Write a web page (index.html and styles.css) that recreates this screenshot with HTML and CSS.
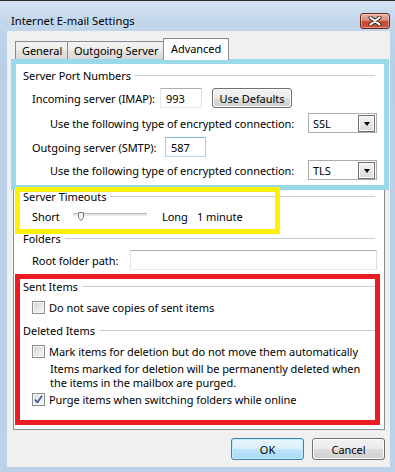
FILE: index.html
```html
<!DOCTYPE html>
<html>
<head>
<meta charset="utf-8">
<title>Internet E-mail Settings</title>
<link rel="stylesheet" href="styles.css">
</head>
<body>
<div class="window">
  <div class="titlebar">
    <span class="title">Internet E-mail Settings</span>
    <div class="close">
      <svg width="14" height="10" viewBox="0 0 14 10">
        <path d="M2.5 1.5 L11.5 8.5 M11.5 1.5 L2.5 8.5" stroke="#3b2a28" stroke-width="4" stroke-linecap="round" fill="none"/>
        <path d="M2.5 1.5 L11.5 8.5 M11.5 1.5 L2.5 8.5" stroke="#ffffff" stroke-width="2.2" stroke-linecap="round" fill="none"/>
      </svg>
    </div>
  </div>
  <div class="client">
    <div class="tabs">
      <div class="tab tab-general">General</div>
      <div class="tab tab-outgoing">Outgoing Server</div>
      <div class="tab tab-advanced active">Advanced</div>
    </div>
    <div class="panel">
      <div class="group-head head-ports"><span>Server Port Numbers</span><i class="rule"></i></div>
      <div class="row row-in">
        <span class="lbl lbl-in">Incoming server (IMAP):</span>
        <div class="textbox tb-in">993</div>
        <div class="btn btn-defaults">Use Defaults</div>
      </div>
      <div class="row row-enc row-enc1">
        <span class="lbl">Use the following type of encrypted connection:</span>
        <div class="select"><span>SSL</span><span class="drop"><i class="tri"></i></span></div>
      </div>
      <div class="row row-out">
        <span class="lbl lbl-out">Outgoing server (SMTP):</span>
        <div class="textbox tb-out">587</div>
      </div>
      <div class="row row-enc row-enc2">
        <span class="lbl">Use the following type of encrypted connection:</span>
        <div class="select"><span>TLS</span><span class="drop"><i class="tri"></i></span></div>
      </div>

      <div class="group-head head-timeouts"><span>Server Timeouts</span><i class="rule"></i></div>
      <div class="row row-slider">
        <span class="lbl lbl-short">Short</span>
        <div class="slider">
          <div class="track"></div>
          <svg class="thumb" width="8" height="9" viewBox="0 0 8 9">
            <path d="M1.5 0.5 H6.5 V5.5 L4 8.5 L1.5 5.5 Z" fill="#f3f3f3" stroke="#7c7c7c" stroke-width="1"/>
          </svg>
        </div>
        <span class="lbl lbl-long">Long</span>
        <span class="lbl">1 minute</span>
      </div>

      <div class="group-head head-folders"><span>Folders</span><i class="rule"></i></div>
      <div class="row row-root">
        <span class="lbl lbl-root">Root folder path:</span>
        <div class="textbox tb-root"></div>
      </div>

      <div class="group-head head-sent"><span>Sent Items</span><i class="rule"></i></div>
      <div class="row row-check row-nosave">
        <span class="cb"></span>
        <span class="lbl">Do not save copies of sent items</span>
      </div>

      <div class="group-head head-deleted"><span>Deleted Items</span><i class="rule"></i></div>
      <div class="row row-check row-mark">
        <span class="cb"></span>
        <span class="lbl">Mark items for deletion but do not move them automatically</span>
      </div>
      <div class="desc">Items marked for deletion will be permanently deleted when<br>the items in the mailbox are purged.</div>
      <div class="row row-check row-purge">
        <span class="cb checked">
          <svg width="11" height="11" viewBox="0 0 11 11"><path d="M2 5.6 L4.4 8.4 L9 1.8" stroke="#3f5a96" stroke-width="1.7" fill="none" stroke-linejoin="round"/></svg>
        </span>
        <span class="lbl">Purge items when switching folders while online</span>
      </div>
    </div>
    <div class="actions">
      <div class="btn btn-default">OK</div>
      <div class="btn">Cancel</div>
    </div>
  </div>

  <div class="hl hl-cyan"></div>
  <div class="hl hl-red"></div>
  <div class="hl hl-yellow"></div>
</div>
</body>
</html>
```

FILE: styles.css
```css
* { box-sizing: border-box; }

html, body {
  margin: 0;
  padding: 0;
}

body {
  width: 395px;
  height: 472px;
  overflow: hidden;
  background: #bcd2ea;
  font-family: "Noto Sans", "Open Sans", sans-serif;
  font-size: 11px;
  letter-spacing: -0.05px;
  color: #000;
}

.window {
  position: relative;
  width: 395px;
  height: 472px;
  border-top: 1px solid #2a2a2a;
  background: linear-gradient(180deg, #d3e2f1 0px, #c3d7ec 20px, #b9cfe8 60px, #bcd2ea 100%);
  display: flex;
  flex-direction: column;
}

/* title bar */
.titlebar {
  height: 30px;
  padding: 9px 5px 0 11px;
  display: flex;
  align-items: center;
  justify-content: space-between;
}

.title {
  font-size: 11.2px;
  letter-spacing: 0;
  color: #000;
}

.close {
  width: 30px;
  height: 16px;
  border: 1px solid #6b2a22;
  border-radius: 3px;
  background: linear-gradient(180deg, #e9b2a6 0%, #d98b7b 45%, #c24832 55%, #c65a40 100%);
  box-shadow: inset 0 0 0 1px rgba(255, 220, 210, 0.45);
  display: flex;
  align-items: center;
  justify-content: center;
}

/* client area */
.client {
  flex: 1;
  margin: 0 5px 5px 7px;
  background: #f0f0f0;
  padding-top: 7px;
  display: flex;
  flex-direction: column;
}

.tabs {
  height: 21px;
  margin-left: 8px;
  display: flex;
  align-items: flex-end;
}

.tab {
  height: 18px;
  border: 1px solid #898c95;
  border-bottom: none;
  margin-right: -1px;
  padding-left: 6px;
  display: flex;
  align-items: center;
  background: linear-gradient(180deg, #f3f3f3 0%, #ececec 50%, #e2e2e2 51%, #d9d9d9 100%);
}

.tab-general { width: 53px; }
.tab-outgoing { width: 97px; padding-left: 6px; }
.tab-advanced { width: 66px; padding-left: 7px; }

.tab.active {
  height: 22px;
  margin-bottom: -1px;
  padding-bottom: 2px;
  background: #fff;
  position: relative;
  z-index: 1;
}

.panel {
  height: 371px;
  margin: 0 5px 0 6px;
  border: 1px solid #898c95;
  background: #fff;
  padding: 0 9px;
  display: flex;
  flex-direction: column;
}

.group-head {
  height: 16px;
  display: flex;
  align-items: center;
  gap: 4px;
}

.rule {
  flex: 1;
  height: 1px;
  background: #c9ced3;
  margin-top: 1px;
}

.head-ports { margin-top: 7px; }
.head-timeouts { margin-top: 8px; }
.head-folders { margin-top: 4px; }
.head-sent { margin-top: 8px; }
.head-deleted { margin-top: 5px; }

.row {
  height: 20px;
  display: flex;
  align-items: center;
  padding-left: 9px;
  white-space: nowrap;
}

.row-in { margin-top: 5px; }
.row-enc1 { margin-top: 5px; }
.row-out { margin-top: 4px; }
.row-enc2 { margin-top: 3px; }
.row-slider { margin-top: 2px; }
.row-root { margin-top: 4px; }
.row-nosave { margin-top: 3px; }
.row-mark { margin-top: 3px; }
.row-purge { margin-top: 0; height: 18px; }

.row-enc { padding-left: 27px; }

.lbl-in { width: 128px; }
.lbl-out { width: 133px; }
.lbl-root { width: 98px; }
.lbl-short { width: 41px; }
.lbl-long { width: 35px; margin-left: 15px; }

.textbox {
  height: 20px;
  border: 1px solid;
  border-color: #abadb3 #dbdfe6 #e3e9ef #e2e3ea;
  background: #fff;
  padding-left: 5px;
  display: flex;
  align-items: center;
}

.tb-in { width: 42px; }
.tb-out { width: 41px; border-color: #7eb4ea #a8cbef #b7d5f2 #a8cbef; }
.tb-root { flex: 1; height: 20px; margin-right: -2px; }

.btn {
  height: 22px;
  border: 1px solid #707070;
  border-radius: 3px;
  background: linear-gradient(180deg, #f2f2f2 0%, #ebebeb 50%, #dddddd 51%, #cfcfcf 100%);
  box-shadow: inset 0 0 0 1px #fbfbfb;
  display: flex;
  align-items: center;
  justify-content: center;
}

.btn-defaults {
  width: 80px;
  height: 20px;
  margin-left: 10px;
}

.select {
  margin-left: auto;
  margin-right: -2px;
  width: 69px;
  height: 20px;
  border: 1px solid #acacac;
  background: #fff;
  padding-left: 4px;
  display: flex;
  align-items: center;
}

.drop {
  margin-left: auto;
  margin-right: 1px;
  width: 17px;
  height: 17px;
  border: 1px solid #6f6f6f;
  background: linear-gradient(180deg, #f4f4f4 0%, #e6e6e6 50%, #dadada 100%);
  box-shadow: inset 0 0 0 1px #fdfdfd;
  display: flex;
  align-items: center;
  justify-content: center;
}

.tri {
  width: 0;
  height: 0;
  margin-top: 2px;
  border-left: 3.5px solid transparent;
  border-right: 3.5px solid transparent;
  border-top: 4px solid #000;
}

/* slider */
.slider {
  position: relative;
  width: 74px;
  height: 20px;
}

.track {
  position: absolute;
  left: 0;
  right: 0;
  top: 7px;
  height: 3px;
  border-top: 1px solid #b4b4b4;
  background: #e6e8e9;
}

.thumb {
  position: absolute;
  left: 4px;
  top: 6px;
}

/* checkboxes */
.row-check { gap: 4px; }

.cb {
  width: 13px;
  height: 13px;
  border: 1px solid #8e8f8f;
  background: linear-gradient(135deg, #cbcfd5 0%, #e4e6e8 50%, #f7f7f7 100%);
  box-shadow: inset 0 0 0 1px #f6f6f6;
  display: flex;
  align-items: center;
  justify-content: center;
  flex: none;
}

.cb.checked {
  background: linear-gradient(135deg, #d9dce0 0%, #eef0f2 60%, #fafafa 100%);
}

.desc {
  margin-top: 1px;
  padding-left: 27px;
  line-height: 14px;
}

/* dialog buttons */
.actions {
  margin-top: 8px;
  padding-right: 5px;
  display: flex;
  justify-content: flex-end;
  gap: 8px;
}

.actions .btn { width: 73px; }

.btn-default {
  border-color: #3c7fb1;
  background: linear-gradient(180deg, #eaf6fd 0%, #d9f0fc 50%, #bee6fd 51%, #a7d9f5 100%);
  box-shadow: inset 0 0 0 1px #c4ebff;
}

/* annotation rectangles drawn over the dialog */
.hl {
  position: absolute;
  border: 5px solid;
  pointer-events: none;
}

.hl-cyan {
  left: 11px;
  top: 58px;
  width: 378px;
  height: 131px;
  border-color: #99d9ea;
}

.hl-yellow {
  left: 15px;
  top: 186px;
  width: 265px;
  height: 47px;
  border-color: #fff200;
}

.hl-red {
  left: 15px;
  top: 273px;
  width: 365px;
  height: 151px;
  border-color: #ed1c24;
}
```
